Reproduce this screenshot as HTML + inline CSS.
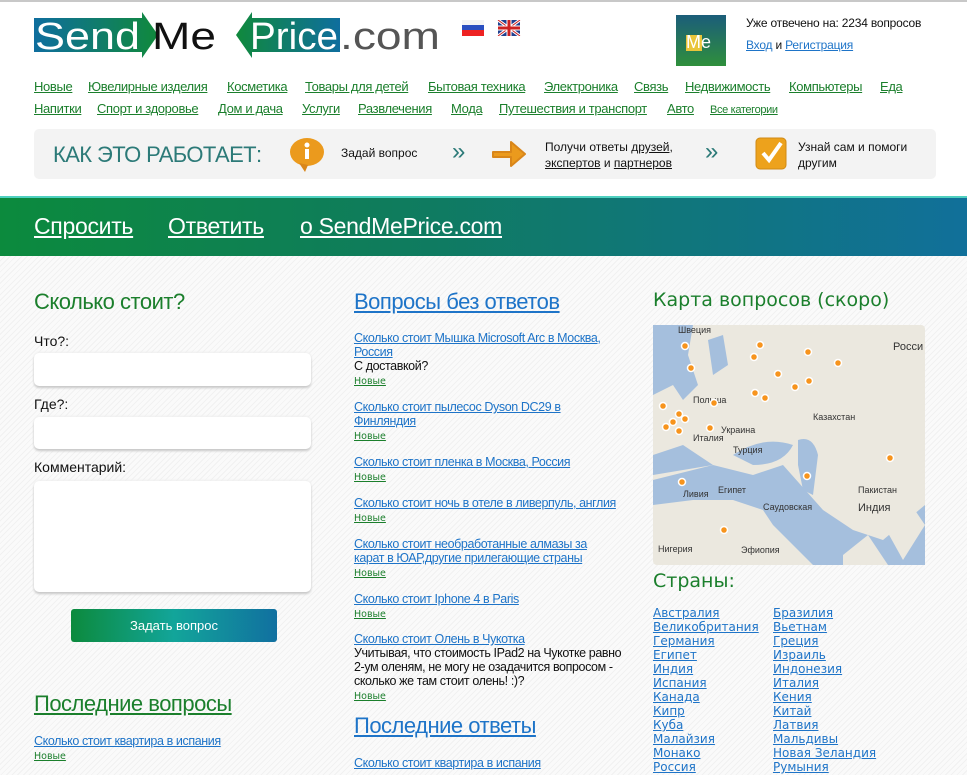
<!DOCTYPE html>
<html><head><meta charset="utf-8"><style>
*{margin:0;padding:0;box-sizing:border-box}
body{width:967px;height:775px;overflow:hidden;font-family:"Liberation Sans",sans-serif;font-size:13px;color:#111;background:#fff;position:relative}
a{text-decoration:underline}
.abs{position:absolute}
.topline{left:0;top:0;width:967px;height:2px;background:#c8c8c8}
.nav a{color:#1b7f2c;font-size:13px;letter-spacing:-0.35px;white-space:nowrap;position:absolute}
.how{left:34px;top:129px;width:902px;height:50px;background:#f3f3f3;border-radius:5px}
.banner{left:0;top:196px;width:967px;height:60px;background:linear-gradient(90deg,#0c8a3d 0%,#0f7c5c 40%,#11709a 100%);border-top:2px solid #4fd0c0}
.banner a{color:#fff;font-size:23px;position:absolute;top:15px;letter-spacing:-0.3px}
.main{left:0;top:256px;width:967px;height:519px;background:repeating-linear-gradient(135deg,#fafafa 0,#fafafa 3px,#f1f1f1 3px,#f1f1f1 4px)}
h2{font-weight:normal;color:#1b7f2c;font-size:22px;letter-spacing:-0.5px}
.blue{color:#1e74c8}
.inp{background:#fff;border-radius:5px;box-shadow:0 2px 2px #c8c8c8,0 -1px 2px #eee}
.q{font-size:12.5px;letter-spacing:-0.4px;line-height:14px;width:285px}
.q a{color:#1e74c8}
.q .n{color:#1b7f2c;font-size:9.5px;letter-spacing:0;font-family:"DejaVu Sans",sans-serif;line-height:11px;display:inline-block}
.c a{display:block;color:#1e74c8;font-family:"DejaVu Sans",sans-serif;font-size:12px;line-height:14px}
</style></head><body>
<div class="abs topline"></div>
<svg class="abs" style="left:34px;top:12px" width="410" height="48" viewBox="0 0 410 48">
<defs><linearGradient id="g1" x1="0" x2="1"><stop offset="0" stop-color="#0f6e9e"/><stop offset="1" stop-color="#10893c"/></linearGradient>
<linearGradient id="g2" x1="0" x2="1"><stop offset="0" stop-color="#10893c"/><stop offset="1" stop-color="#0f6e9e"/></linearGradient></defs>
<polygon points="0,6 108,6 108,0 124,23 108,46 108,40 0,40" fill="url(#g1)"/>
<polygon points="306,6 218,6 218,0 202,23 218,46 218,40 306,40" fill="url(#g2)"/>
<text x="1" y="37" font-family="Liberation Sans" font-size="38" fill="#fff" textLength="105" lengthAdjust="spacingAndGlyphs">Send</text>
<text x="118" y="37" font-family="Liberation Sans" font-size="38" fill="#111" textLength="64" lengthAdjust="spacingAndGlyphs">Me</text>
<text x="216" y="37" font-family="Liberation Sans" font-size="38" fill="#fff" textLength="88" lengthAdjust="spacingAndGlyphs">Price</text>
<text x="306" y="37" font-family="Liberation Sans" font-size="38" fill="#555" textLength="100" lengthAdjust="spacingAndGlyphs">.com</text>
</svg>
<svg class="abs" style="left:462px;top:20px" width="60" height="16"><rect width="22" height="5" fill="#f4f4f4"/><rect y="5" width="22" height="5" fill="#2a4fc0"/><rect y="10" width="22" height="6" fill="#e22"/>
<g transform="translate(36,0)"><rect width="22" height="16" fill="#1f3f8f"/><path d="M0 0L22 16M22 0L0 16" stroke="#fff" stroke-width="3"/><path d="M0 0L22 16M22 0L0 16" stroke="#c22" stroke-width="1"/><path d="M11 0V16M0 8H22" stroke="#fff" stroke-width="5"/><path d="M11 0V16M0 8H22" stroke="#c22" stroke-width="3"/></g></svg>
<div class="abs" style="left:676px;top:15px;width:50px;height:51px;background:linear-gradient(#1b5d7a,#2f8f3c)"><div style="position:absolute;left:10px;top:20px;width:16px;height:16px;background:#e9c53a"></div><span style="position:absolute;left:10px;top:17px;color:#fff;font-family:'Liberation Sans';font-size:18px">Me</span></div>
<div class="abs" style="left:746px;top:12px;line-height:22px;font-size:12px;letter-spacing:-0.2px">Уже отвечено на: 2234 вопросов<br><a class="blue">Вход</a> и <a class="blue">Регистрация</a></div>
<div class="abs nav" style="left:0;top:78px;width:967px;height:40px;line-height:16px">
<a style="left:34px;top:1px">Новые</a><a style="left:88px;top:1px">Ювелирные изделия</a><a style="left:227px;top:1px">Косметика</a><a style="left:305px;top:1px">Товары для детей</a><a style="left:428px;top:1px">Бытовая техника</a><a style="left:544px;top:1px">Электроника</a><a style="left:634px;top:1px">Связь</a><a style="left:685px;top:1px">Недвижимость</a><a style="left:789px;top:1px">Компьютеры</a><a style="left:880px;top:1px">Еда</a>
<a style="left:34px;top:23px">Напитки</a><a style="left:97px;top:23px">Спорт и здоровье</a><a style="left:218px;top:23px">Дом и дача</a><a style="left:302px;top:23px">Услуги</a><a style="left:358px;top:23px">Развлечения</a><a style="left:451px;top:23px">Мода</a><a style="left:499px;top:23px">Путешествия и транспорт</a><a style="left:667px;top:23px">Авто</a><a style="left:710px;top:24px;font-size:11px">Все категории</a></div>
<div class="abs how">
<div class="abs" style="left:19px;top:13px;font-size:22px;color:#2c7a78;letter-spacing:-0.6px">КАК ЭТО РАБОТАЕТ:</div>
<svg class="abs" style="left:255px;top:8px" width="36" height="36"><ellipse cx="18" cy="15" rx="17" ry="14" fill="#eb9a1d"/><path d="M10 26L16 35L19 28Z" fill="#d9861a"/><circle cx="18" cy="8" r="2.5" fill="#fff"/><rect x="16" y="12" width="4" height="10" fill="#fff"/></svg>
<div class="abs" style="left:307px;top:17px;font-size:12px">Задай вопрос</div>
<div class="abs" style="left:418px;top:9px;font-size:24px;color:#2c7a78">»</div>
<svg class="abs" style="left:457px;top:7px" width="36" height="36"><path d="M2 16H20V6L34 18L20 30V21H2Z" fill="#eb9a1d" stroke="#d9861a" stroke-linejoin="round" stroke-width="2"/></svg>
<div class="abs" style="left:511px;top:10px;font-size:12px;line-height:16px">Получи ответы <u>друзей</u>,<br><u>экспертов</u> и <u>партнеров</u></div>
<div class="abs" style="left:671px;top:9px;font-size:24px;color:#2c7a78">»</div>
<svg class="abs" style="left:721px;top:8px" width="32" height="34"><rect x="1" y="1" width="30" height="31" rx="4" fill="#eda21c" stroke="#d08a14"/><path d="M8 16L14 23L26 6" stroke="#fff" stroke-width="4" fill="none"/></svg>
<div class="abs" style="left:764px;top:10px;font-size:12px;line-height:16px">Узнай сам и помоги<br>другим</div>
</div>
<div class="abs banner"><a style="left:34px">Спросить</a><a style="left:168px">Ответить</a><a style="left:300px">о SendMePrice.com</a></div>
<div class="abs main"></div>
<h2 class="abs" style="left:34px;top:289px">Сколько стоит?</h2>
<div class="abs" style="left:34px;top:333px;font-size:14px">Что?:</div>
<div class="abs inp" style="left:34px;top:353px;width:277px;height:33px"></div>
<div class="abs" style="left:34px;top:396px;font-size:14px">Где?:</div>
<div class="abs inp" style="left:34px;top:417px;width:277px;height:32px"></div>
<div class="abs" style="left:34px;top:459px;font-size:14px">Комментарий:</div>
<div class="abs inp" style="left:34px;top:481px;width:277px;height:111px"></div>
<div class="abs" style="left:71px;top:609px;width:206px;height:33px;border-radius:3px;background:linear-gradient(90deg,#0c8a3d,#12a59a 50%,#1170a0);color:#fff;text-align:center;line-height:33px;font-size:13px">Задать вопрос</div>
<h2 class="abs" style="left:34px;top:691px"><a style="color:#1b7f2c">Последние вопросы</a></h2>
<div class="abs q" style="left:34px;top:734px"><a>Сколько стоит квартира в испания</a><br><a class="n">Новые</a></div>
<h2 class="abs" style="left:354px;top:289px"><a class="blue">Вопросы без ответов</a></h2>
<div class="abs q" style="left:354px;top:331px"><a>Сколько стоит Мышка Microsoft Arc в Москва, Россия</a><br>С доставкой?<br><a class="n">Новые</a></div>
<div class="abs q" style="left:354px;top:400px;width:220px"><a>Сколько стоит пылесос Dyson DC29 в Финляндия</a><br><a class="n">Новые</a></div>
<div class="abs q" style="left:354px;top:455px"><a>Сколько стоит пленка в Москва, Россия</a><br><a class="n">Новые</a></div>
<div class="abs q" style="left:354px;top:496px;width:290px"><a>Сколько стоит ночь в отеле в ливерпуль, англия</a><br><a class="n">Новые</a></div>
<div class="abs q" style="left:354px;top:537px;width:258px"><a>Сколько стоит необработанные алмазы за карат в ЮАР,другие прилегающие страны</a><br><a class="n">Новые</a></div>
<div class="abs q" style="left:354px;top:592px"><a>Сколько стоит Iphone 4 в Paris</a><br><a class="n">Новые</a></div>
<div class="abs q" style="left:354px;top:632px;width:280px"><a>Сколько стоит Олень в Чукотка</a><br>Учитывая, что стоимость IPad2 на Чукотке равно 2-ум оленям, не могу не озадачится вопросом - сколько же там стоит олень! :)?<br><a class="n">Новые</a></div>
<h2 class="abs" style="left:354px;top:713px"><a class="blue">Последние ответы</a></h2>
<div class="abs q" style="left:354px;top:756px"><a>Сколько стоит квартира в испания</a></div>
<h2 class="abs" style="left:653px;top:289px;font-family:'DejaVu Sans',sans-serif;font-size:19px;letter-spacing:0">Карта вопросов (скоро)</h2>
<svg class="abs" style="left:653px;top:325px" width="272" height="240" viewBox="0 0 272 240">
<rect width="272" height="240" rx="4" fill="#ebe8df"/>
<path d="M0 0H40L35 30L45 60L30 75L20 60L0 70Z" fill="#a5bfdd"/>
<path d="M55 15L70 10L75 40L60 50Z" fill="#a5bfdd"/>
<path d="M0 155L60 140L100 150L130 140L170 185L200 205L230 215L272 180V240H160L120 200L110 185L80 175L40 175L0 180Z" fill="#a5bfdd"/>
<path d="M0 130L30 120L60 140L0 150Z" fill="#a5bfdd"/>
<path d="M80 130Q110 110 140 120Q130 140 100 140Z" fill="#a5bfdd"/>
<path d="M145 115Q160 110 165 130L160 170L150 165L145 140Z" fill="#a5bfdd"/>
<path d="M190 230L215 210L235 240H190Z" fill="#ebe8df"/>
<path d="M225 190L255 175L272 200L250 235Z" fill="#ebe8df"/>
<g font-family="Liberation Sans" font-size="9" fill="#333"><text x="25" y="8">Швеция</text><text x="40" y="78">Польша</text><text x="68" y="108">Украина</text><text x="80" y="128">Турция</text><text x="160" y="95">Казахстан</text><text x="240" y="25" font-size="11">Росси</text><text x="30" y="172">Ливия</text><text x="65" y="168">Египет</text><text x="110" y="185">Саудовская</text><text x="205" y="168">Пакистан</text><text x="205" y="186" font-size="11">Индия</text><text x="5" y="227">Нигерия</text><text x="88" y="228">Эфиопия</text><text x="40" y="116">Италия</text></g>
<g fill="#f7941d" stroke="#fff" stroke-width="1.5"><circle cx="32" cy="21" r="3.5"/><circle cx="107" cy="20" r="3.5"/><circle cx="101" cy="32" r="3.5"/><circle cx="155" cy="27" r="3.5"/><circle cx="185" cy="38" r="3.5"/><circle cx="38" cy="43" r="3.5"/><circle cx="125" cy="49" r="3.5"/><circle cx="156" cy="56" r="3.5"/><circle cx="142" cy="62" r="3.5"/><circle cx="102" cy="68" r="3.5"/><circle cx="112" cy="73" r="3.5"/><circle cx="10" cy="81" r="3.5"/><circle cx="61" cy="78" r="3.5"/><circle cx="26" cy="89" r="3.5"/><circle cx="32" cy="94" r="3.5"/><circle cx="20" cy="97" r="3.5"/><circle cx="13" cy="102" r="3.5"/><circle cx="26" cy="106" r="3.5"/><circle cx="57" cy="103" r="3.5"/><circle cx="237" cy="133" r="3.5"/><circle cx="154" cy="151" r="3.5"/><circle cx="29" cy="157" r="3.5"/><circle cx="71" cy="205" r="3.5"/></g>
</svg>
<h2 class="abs" style="left:653px;top:570px;font-family:'DejaVu Sans',sans-serif;font-size:19px;letter-spacing:0">Страны:</h2>
<div class="abs c" style="left:653px;top:606px"><a>Австралия</a><a>Великобритания</a><a>Германия</a><a>Египет</a><a>Индия</a><a>Испания</a><a>Канада</a><a>Кипр</a><a>Куба</a><a>Малайзия</a><a>Монако</a><a>Россия</a></div>
<div class="abs c" style="left:773px;top:606px"><a>Бразилия</a><a>Вьетнам</a><a>Греция</a><a>Израиль</a><a>Индонезия</a><a>Италия</a><a>Кения</a><a>Китай</a><a>Латвия</a><a>Мальдивы</a><a>Новая Зеландия</a><a>Румыния</a></div>
</body></html>
